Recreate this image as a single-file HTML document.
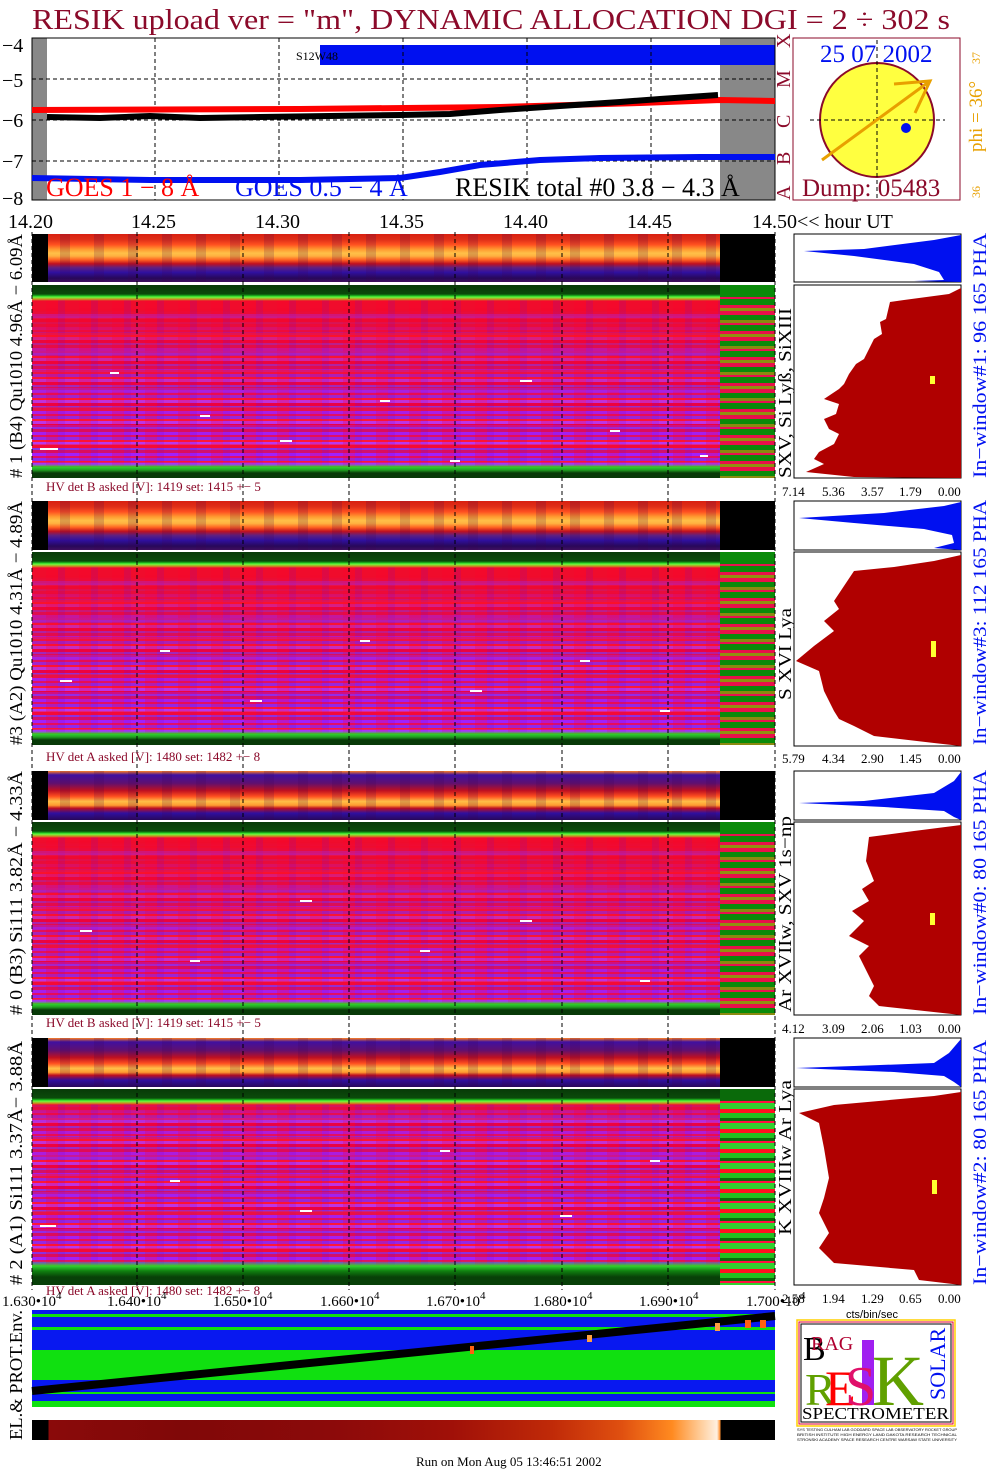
<!DOCTYPE html>
<html><head><meta charset="utf-8">
<style>
*{margin:0;padding:0}
body{width:1004px;height:1476px;background:#fff;position:relative;overflow:hidden;font-family:"Liberation Serif",serif}
.a{position:absolute}
.strip{background:linear-gradient(to bottom,#d82010 0%,#e03018 12%,#ff5020 22%,#ff9a30 32%,#ffc048 40%,#ffb040 46%,#ff6020 54%,#c01020 62%,#602080 70%,#3010a0 80%,#28085a 92%,#401060 100%)}
.strip2{background:linear-gradient(to bottom,#ff8020 0%,#4010a0 8%,#601070 25%,#c01020 40%,#ff5020 52%,#ffc048 62%,#ff9a30 70%,#c01020 76%,#3010a0 86%,#28085a 100%)}
.sn{background:repeating-linear-gradient(to right,rgba(0,0,0,0) 0 12px,rgba(60,0,80,.18) 12px 22px,rgba(0,0,0,0) 22px 34px)}
.big{background:#f00c2c}
.purp{position:absolute;left:0;top:0;right:0;bottom:0;background:repeating-linear-gradient(to bottom,#a020ff 0 3px,#e0106a 3px 5px,#9028f0 5px 8px,#ff1838 8px 10px,#b838f8 10px 13px,#e8004a 13px 16px,#8a30e8 16px 18px,#d01070 18px 21px);-webkit-mask-image:linear-gradient(to bottom,transparent 12%,rgba(0,0,0,.5) 30%,rgba(0,0,0,.85) 60%,#000 90%);mask-image:linear-gradient(to bottom,transparent 12%,rgba(0,0,0,.5) 30%,rgba(0,0,0,.85) 60%,#000 90%)}
.vn{position:absolute;left:0;top:0;right:0;bottom:0;background:repeating-linear-gradient(to bottom,rgba(0,0,0,0) 0 11px,rgba(255,20,40,.45) 11px 15px,rgba(0,0,0,0) 15px 29px,rgba(150,40,255,.35) 29px 33px,rgba(0,0,0,0) 33px 37px),repeating-linear-gradient(to right,rgba(255,0,40,.0) 0 14px,rgba(255,0,40,.25) 14px 26px,rgba(120,0,200,.15) 26px 33px)}
.gt{position:absolute;left:0;right:0;top:0;height:16px;background:linear-gradient(to bottom,#083a08 0,#0a4a0a 9px,#20c020 11px,#60ff40 12px,#c0a020 14px,transparent 16px)}
.gb{position:absolute;left:0;right:0;bottom:0;height:14px;background:linear-gradient(to bottom,transparent 0,#30d030 3px,#20a020 6px,#083a08 9px,#083a08 14px)}
.gc{background:linear-gradient(to bottom,#0a8a0a 0,#0a8a0a 12px,transparent 12px),repeating-linear-gradient(to bottom,#e8104a 0 4px,#0a8a0a 4px 9px,#8a8a10 9px 12px,#e81050 12px 14px,#0a8a0a 14px 20px,#e8104a 20px 23px,#909010 23px 26px)}
.gc4{background:linear-gradient(to bottom,#0a6a0a 0,#0a6a0a 12px,transparent 12px),repeating-linear-gradient(to bottom,#ff1020 0 4px,#20c020 4px 9px,#0a6a0a 9px 12px,#ff1040 12px 14px,#30d030 14px 20px)}
</style></head><body>

<div class="a" style="left:32px;top:38px;width:15px;height:162px;background:#888"></div>
<div class="a" style="left:720px;top:38px;width:55px;height:162px;background:#888"></div>
<div class="a" style="left:320px;top:45px;width:455px;height:20px;background:#0010f0"></div>

<div class="a strip" style="left:48px;top:234px;width:672px;height:48px"><div class="a sn" style="left:0;top:0;right:0;bottom:0"></div></div>
<div class="a" style="left:32px;top:234px;width:16px;height:48px;background:#000"></div>
<div class="a" style="left:720px;top:234px;width:55px;height:48px;background:#000"></div>
<div class="a big" style="left:32px;top:285px;width:688px;height:193px"><div class="purp"></div><div class="vn"></div><div class="gt"></div><div class="gb"></div></div>
<div class="a gc" style="left:720px;top:285px;width:55px;height:193px"></div>

<div class="a strip" style="left:48px;top:501px;width:672px;height:49px"><div class="a sn" style="left:0;top:0;right:0;bottom:0"></div></div>
<div class="a" style="left:32px;top:501px;width:16px;height:49px;background:#000"></div>
<div class="a" style="left:720px;top:501px;width:55px;height:49px;background:#000"></div>
<div class="a big" style="left:32px;top:552px;width:688px;height:193px"><div class="purp"></div><div class="vn"></div><div class="gt"></div><div class="gb"></div></div>
<div class="a gc" style="left:720px;top:552px;width:55px;height:193px"></div>

<div class="a strip2" style="left:48px;top:771px;width:672px;height:49px"><div class="a sn" style="left:0;top:0;right:0;bottom:0"></div></div>
<div class="a" style="left:32px;top:771px;width:16px;height:49px;background:#000"></div>
<div class="a" style="left:720px;top:771px;width:55px;height:49px;background:#000"></div>
<div class="a big" style="left:32px;top:822px;width:688px;height:193px"><div class="purp" style="-webkit-mask-image:linear-gradient(to bottom,transparent 10%,rgba(0,0,0,.6) 40%,#000 100%);mask-image:linear-gradient(to bottom,transparent 10%,rgba(0,0,0,.6) 40%,#000 100%)"></div><div class="vn"></div><div class="gt" style="height:22px"></div><div class="gb"></div></div>
<div class="a gc" style="left:720px;top:822px;width:55px;height:193px"></div>

<div class="a strip2" style="left:48px;top:1038px;width:672px;height:49px"><div class="a sn" style="left:0;top:0;right:0;bottom:0"></div></div>
<div class="a" style="left:32px;top:1038px;width:16px;height:49px;background:#000"></div>
<div class="a" style="left:720px;top:1038px;width:55px;height:49px;background:#000"></div>
<div class="a big" style="left:32px;top:1089px;width:688px;height:196px"><div class="purp" style="-webkit-mask-image:linear-gradient(to bottom,transparent 6%,rgba(0,0,0,.8) 15%,#000 100%);mask-image:linear-gradient(to bottom,transparent 6%,rgba(0,0,0,.8) 15%,#000 100%)"></div><div class="vn"></div><div class="gt"></div><div class="gb" style="height:24px;background:linear-gradient(to bottom,transparent 0,#30d030 5px,#108010 10px,#084008 16px)"></div></div>
<div class="a gc4" style="left:720px;top:1089px;width:55px;height:196px"></div>

<!-- env plot -->
<div class="a" style="left:32px;top:1310px;width:743px;height:97px;background:
linear-gradient(to bottom,transparent 0,transparent 4px,#10e010 4px,#10e010 7px,transparent 7px,transparent 17px,#10e010 17px,#10e010 20px,transparent 20px,transparent 40px,#10e010 40px,#10e010 70px,transparent 70px,transparent 82px,#10e010 82px,#10e010 84px,transparent 84px,transparent 91px,#10e010 91px),#0818f0"></div>
<div class="a" style="left:32px;top:1420px;width:743px;height:20px;background:linear-gradient(to right,#000 0,#000 16px,#8a0a0a 17px,#800808 150px,#8c0a0a 300px,#a01008 420px,#c02a08 520px,#e05010 590px,#ff8a20 640px,#ffd0a0 670px,#fff0e0 685px,#ff9030 688px,#000 689px,#000 743px)"></div>

<svg class="a" style="left:0;top:0" width="1004" height="1476" xmlns="http://www.w3.org/2000/svg" font-family="Liberation Serif, serif">
<text x="32" y="29" font-size="28" fill="#8b0a2a" textLength="918" lengthAdjust="spacingAndGlyphs">RESIK upload ver = "m", DYNAMIC ALLOCATION  DGI =   2 ÷ 302 s</text>

<g stroke="#000" stroke-dasharray="4,3" stroke-width="1">
<line x1="155" y1="38" x2="155" y2="200"/><line x1="279" y1="38" x2="279" y2="200"/><line x1="403" y1="38" x2="403" y2="200"/><line x1="527" y1="38" x2="527" y2="200"/><line x1="651" y1="38" x2="651" y2="200"/>
<line x1="32" y1="79" x2="775" y2="79"/><line x1="32" y1="120" x2="775" y2="120"/><line x1="32" y1="161" x2="775" y2="161"/>
</g>
<rect x="32" y="38" width="743" height="162" fill="none" stroke="#000"/>
<g font-size="20" fill="#000"><text x="2" y="52">−4</text><text x="2" y="87">−5</text><text x="2" y="127">−6</text><text x="2" y="168">−7</text><text x="2" y="205">−8</text></g>
<text x="296" y="60" font-size="12" fill="#000">S12W48</text>
<path d="M32 110 L300 109 L500 107 L640 103 L720 100 L775 101" stroke="#f00" stroke-width="6" fill="none"/>
<path d="M47 117 L100 118 L150 116 L200 118 L260 117 L330 116 L400 115 L450 114 L500 110 L560 106 L620 102 L660 99 L718 95" stroke="#000" stroke-width="6" fill="none"/>
<path d="M32 178 L150 180 L300 180 L400 178 L440 172 L480 165 L540 160 L600 158 L700 157 L775 157" stroke="#0010f0" stroke-width="6" fill="none"/>
<text x="46" y="196" font-size="26" fill="#f00">GOES 1 − 8 Å</text>
<text x="235" y="196" font-size="26" fill="#0010f0">GOES 0.5 − 4 Å</text>
<text x="455" y="196" font-size="26" fill="#000">RESIK total #0  3.8 − 4.3 Å</text>
<g font-size="20" fill="#8b0a2a"><text transform="translate(790,200) rotate(-90)">A</text><text transform="translate(790,165) rotate(-90)">B</text><text transform="translate(790,128) rotate(-90)">C</text><text transform="translate(790,88) rotate(-90)">M</text><text transform="translate(790,48) rotate(-90)">X</text></g>

<rect x="793" y="38" width="167" height="162" fill="none" stroke="#8b0a2a"/>
<circle cx="877" cy="120" r="57" fill="#ffff40" stroke="#8b0a2a" stroke-width="2"/>
<line x1="877" y1="40" x2="877" y2="198" stroke="#000" stroke-dasharray="4,3"/>
<line x1="810" y1="120" x2="945" y2="120" stroke="#000" stroke-dasharray="4,3"/>
<path d="M822 160 L930 81 M894 84 L930 81 L915 113" stroke="#e8a000" stroke-width="3" fill="none"/>
<circle cx="906" cy="128" r="5" fill="#0010f0"/>
<text x="820" y="62" font-size="25" fill="#0010f0">25 07 2002</text>
<text x="802" y="196" font-size="25" fill="#8b0a2a">Dump: 05483</text>
<text transform="translate(982,152) rotate(-90)" font-size="19" fill="#e8a000">phi = 36°</text>
<text transform="translate(980,64) rotate(-90)" font-size="12" fill="#e8a000">37</text>
<text transform="translate(980,198) rotate(-90)" font-size="12" fill="#e8a000">36</text>

<g font-size="20" fill="#000"><text x="8" y="228">14.20</text><text x="131" y="228">14.25</text><text x="255" y="228">14.30</text><text x="379" y="228">14.35</text><text x="503" y="228">14.40</text><text x="627" y="228">14.45</text><text x="752" y="228">14.50&lt;&lt; hour UT</text></g>

<g stroke="#000" stroke-dasharray="4,3" stroke-width="1">
<line x1="32" y1="232" x2="32" y2="1290"/><line x1="137" y1="232" x2="137" y2="1290"/><line x1="243" y1="232" x2="243" y2="1290"/><line x1="349" y1="232" x2="349" y2="1290"/><line x1="455" y1="232" x2="455" y2="1290"/><line x1="562" y1="232" x2="562" y2="1290"/><line x1="668" y1="232" x2="668" y2="1290"/><line x1="775" y1="232" x2="775" y2="1290"/>
</g>

<!-- scattered white dashes -->
<g fill="#fff">
<rect x="40" y="448" width="18" height="2"/><rect x="110" y="372" width="9" height="2"/><rect x="200" y="415" width="10" height="2"/><rect x="280" y="440" width="12" height="2"/><rect x="380" y="400" width="10" height="2"/><rect x="450" y="460" width="10" height="2"/><rect x="520" y="380" width="12" height="2"/><rect x="610" y="430" width="10" height="2"/><rect x="700" y="455" width="8" height="2"/>
<rect x="60" y="680" width="12" height="2"/><rect x="160" y="650" width="10" height="2"/><rect x="250" y="700" width="12" height="2"/><rect x="360" y="640" width="10" height="2"/><rect x="470" y="690" width="12" height="2"/><rect x="580" y="660" width="10" height="2"/><rect x="660" y="710" width="10" height="2"/>
<rect x="80" y="930" width="12" height="2"/><rect x="190" y="960" width="10" height="2"/><rect x="300" y="900" width="12" height="2"/><rect x="420" y="950" width="10" height="2"/><rect x="520" y="920" width="12" height="2"/><rect x="640" y="980" width="10" height="2"/>
<rect x="40" y="1225" width="16" height="2"/><rect x="170" y="1180" width="10" height="2"/><rect x="300" y="1210" width="12" height="2"/><rect x="440" y="1150" width="10" height="2"/><rect x="560" y="1215" width="12" height="2"/><rect x="650" y="1160" width="10" height="2"/>
</g>

<g font-size="13" fill="#8b0a2a">
<text x="46" y="491">HV det B asked [V]:  1419 set:  1415 +−   5</text>
<text x="46" y="761">HV det A asked [V]:  1480 set:  1482 +−    8</text>
<text x="46" y="1027">HV det B asked [V]:  1419 set:  1415 +−   5</text>
<text x="46" y="1295">HV det A asked [V]:  1480 set:  1482 +−    8</text>
</g>

<g font-size="18" fill="#000">
<text transform="translate(22,478) rotate(-90)" textLength="244" lengthAdjust="spacingAndGlyphs"># 1 (B4) Qu1010 4.96Å − 6.09Å</text>
<text transform="translate(22,745) rotate(-90)" textLength="244" lengthAdjust="spacingAndGlyphs">#3 (A2) Qu1010  4.31Å − 4.89Å</text>
<text transform="translate(22,1015) rotate(-90)" textLength="244" lengthAdjust="spacingAndGlyphs"># 0 (B3) Si111  3.82Å −  4.33Å</text>
<text transform="translate(22,1285) rotate(-90)" textLength="244" lengthAdjust="spacingAndGlyphs"># 2 (A1) Si111  3.37Å−  3.88Å</text>
<text transform="translate(22,1440) rotate(-90)" textLength="130" lengthAdjust="spacingAndGlyphs">EL.&amp; PROT.Env.</text>
</g>
<g font-size="18" fill="#000">
<text transform="translate(791,478) rotate(-90)" textLength="170" lengthAdjust="spacingAndGlyphs">SXV, Si Lyß, SiXIII</text>
<text transform="translate(791,700) rotate(-90)" textLength="92" lengthAdjust="spacingAndGlyphs">S XVI Lya</text>
<text transform="translate(791,1012) rotate(-90)" textLength="196" lengthAdjust="spacingAndGlyphs">Ar XVIIw,  SXV 1s−np</text>
<text transform="translate(791,1235) rotate(-90)" textLength="155" lengthAdjust="spacingAndGlyphs">K XVIIIw  Ar Lya</text>
</g>
<g font-size="19" fill="#0010f0">
<text transform="translate(986,478) rotate(-90)" textLength="245" lengthAdjust="spacingAndGlyphs">In−window#1:  96 165 PHA</text>
<text transform="translate(986,745) rotate(-90)" textLength="245" lengthAdjust="spacingAndGlyphs">In−window#3:  112 165 PHA</text>
<text transform="translate(986,1015) rotate(-90)" textLength="245" lengthAdjust="spacingAndGlyphs">In−window#0:  80 165 PHA</text>
<text transform="translate(986,1285) rotate(-90)" textLength="245" lengthAdjust="spacingAndGlyphs">In−window#2:  80 165 PHA</text>
</g>

<g transform="translate(794,234)">
<rect width="167" height="48" fill="#fff" stroke="#000"/>
<path d="M167 1 L140 6 L70 15 L10 17 L60 22 L120 30 L145 38 L150 46 L120 47 L167 48 Z" fill="#0010f0"/>
<rect y="51" width="167" height="193" fill="#fff" stroke="#000"/>
<path d="M167 54 L155 60 L110 66 L96 68 L92 85 L86 88 L88 100 L80 105 L75 115 L70 125 L62 130 L55 140 L50 150 L45 155 L30 165 L45 170 L42 180 L30 185 L35 195 L45 200 L40 210 L25 218 L20 225 L30 230 L12 238 L60 243 L167 244 Z" fill="#b00000"/>
<rect x="136" y="142" width="5" height="8" fill="#ffff30"/>
</g>
<g transform="translate(794,501)">
<rect width="167" height="49" fill="#fff" stroke="#000"/>
<path d="M167 1 L150 5 L90 12 L5 17 L60 22 L130 28 L158 34 L160 42 L140 47 L167 49 Z" fill="#0010f0"/>
<rect y="51" width="167" height="194" fill="#fff" stroke="#000"/>
<path d="M167 54 L140 60 L100 66 L60 70 L50 85 L40 100 L45 108 L30 120 L40 130 L20 145 L2 160 L25 170 L30 190 L40 210 L45 218 L60 225 L80 235 L140 242 L167 245 Z" fill="#b00000"/>
<rect x="137" y="140" width="5" height="16" fill="#ffff30"/>
</g>
<g transform="translate(794,771)">
<rect width="167" height="49" fill="#fff" stroke="#000"/>
<path d="M167 1 L160 10 L140 22 L70 30 L5 32 L90 36 L150 40 L160 46 L167 49 Z" fill="#0010f0"/>
<rect y="51" width="167" height="193" fill="#fff" stroke="#000"/>
<path d="M167 54 L120 60 L75 66 L72 90 L80 110 L68 118 L75 130 L58 140 L70 150 L55 165 L75 175 L65 185 L70 195 L80 215 L75 225 L85 235 L167 244 Z" fill="#b00000"/>
<rect x="136" y="142" width="5" height="12" fill="#ffff30"/>
</g>
<g transform="translate(794,1038)">
<rect width="167" height="49" fill="#fff" stroke="#000"/>
<path d="M167 1 L155 15 L140 25 L60 28 L2 30 L100 34 L150 38 L160 44 L167 49 Z" fill="#0010f0"/>
<rect y="51" width="167" height="196" fill="#fff" stroke="#000"/>
<path d="M167 54 L140 58 L40 67 L5 75 L25 85 L30 110 L35 140 L30 160 L25 175 L35 195 L25 210 L40 225 L120 232 L125 242 L167 247 Z" fill="#b00000"/>
<rect x="138" y="142" width="5" height="14" fill="#ffff30"/>
</g>

<g font-size="13" fill="#000">
<text x="782" y="496">7.14</text><text x="822" y="496">5.36</text><text x="861" y="496">3.57</text><text x="899" y="496">1.79</text><text x="938" y="496">0.00</text>
<text x="782" y="763">5.79</text><text x="822" y="763">4.34</text><text x="861" y="763">2.90</text><text x="899" y="763">1.45</text><text x="938" y="763">0.00</text>
<text x="782" y="1033">4.12</text><text x="822" y="1033">3.09</text><text x="861" y="1033">2.06</text><text x="899" y="1033">1.03</text><text x="938" y="1033">0.00</text>
<text x="782" y="1303">2.58</text><text x="822" y="1303">1.94</text><text x="861" y="1303">1.29</text><text x="899" y="1303">0.65</text><text x="938" y="1303">0.00</text>
<text x="846" y="1318" font-family="Liberation Sans, sans-serif" font-size="11">cts/bin/sec</text>
</g>

<g font-size="15" fill="#000">
<text x="2" y="1306">1.630•10<tspan dy="-7" font-size="11">4</tspan></text>
<text x="107" y="1306">1.640•10<tspan dy="-7" font-size="11">4</tspan></text>
<text x="213" y="1306">1.650•10<tspan dy="-7" font-size="11">4</tspan></text>
<text x="320" y="1306">1.660•10<tspan dy="-7" font-size="11">4</tspan></text>
<text x="426" y="1306">1.670•10<tspan dy="-7" font-size="11">4</tspan></text>
<text x="533" y="1306">1.680•10<tspan dy="-7" font-size="11">4</tspan></text>
<text x="639" y="1306">1.690•10<tspan dy="-7" font-size="11">4</tspan></text>
<text x="746" y="1306">1.700•10<tspan dy="-7" font-size="11">4</tspan></text>
</g>
<path d="M32 1391 L775 1316" stroke="#000" stroke-width="8"/>
<rect x="470" y="1346" width="4" height="8" fill="#ff6010"/><rect x="587" y="1335" width="5" height="7" fill="#ffa040"/><rect x="715" y="1323" width="5" height="8" fill="#ffa040"/><rect x="745" y="1320" width="6" height="8" fill="#ff6010"/><rect x="760" y="1320" width="6" height="8" fill="#ff6010"/>

<rect x="797" y="1320" width="158" height="106" fill="#fff" stroke="#ffd000" stroke-width="1.5"/>
<rect x="799" y="1322" width="154" height="102" fill="none" stroke="#e00030"/>
<rect x="801" y="1324" width="150" height="98" fill="none" stroke="#000"/>
<text x="803" y="1360" font-size="34" fill="#000">B</text>
<text x="811" y="1350" font-size="20" fill="#b00030">RAG</text>
<text x="805" y="1405" font-size="46" fill="#60a000">R</text>
<text x="825" y="1405" font-size="50" fill="#ff0000">E</text>
<rect x="862" y="1340" width="12" height="65" fill="#a020f0"/>
<text x="845" y="1405" font-size="56" fill="#e0106a">S</text>
<text x="872" y="1405" font-size="72" fill="#60a000">K</text>
<text transform="translate(945,1400) rotate(-90)" font-size="22" fill="#0010f0">SOLAR</text>
<text x="802" y="1419" font-size="17" fill="#000" textLength="147" lengthAdjust="spacingAndGlyphs">SPECTROMETER</text>
<g fill="#000" font-size="4" font-family="Liberation Sans, sans-serif"><text x="797" y="1431" textLength="160" lengthAdjust="spacingAndGlyphs">SYS TESTING CULHAM LAB  GODDARD  SPACE  LAB  OBSERVATORY ROCKET GROUP</text><text x="797" y="1436" textLength="160" lengthAdjust="spacingAndGlyphs">BRITISH INSTITUTE  HIGH ENERGY  LAND DAKOTA  RESEARCH TECHNICAL</text><text x="797" y="1441" textLength="160" lengthAdjust="spacingAndGlyphs">STRONSKI ACADEMY SPACE RESEARCH CENTRE  WARSAW  STATE UNIVERSITY</text></g>

<text x="416" y="1466" font-size="13" fill="#000">Run on Mon Aug 05 13:46:51 2002</text>
</svg>
</body></html>
